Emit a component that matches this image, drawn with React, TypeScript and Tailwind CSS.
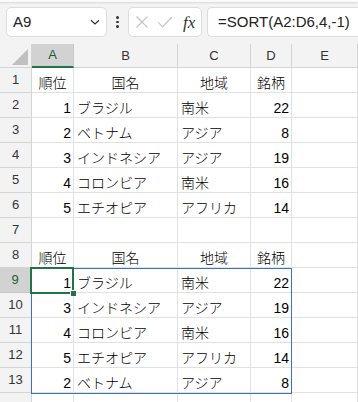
import React from "react";

type Row = { n: number; cells: (string | number)[]; header?: boolean };

const rows: Row[] = [
  { n: 1, cells: ["順位", "国名", "地域", "銘柄"], header: true },
  { n: 2, cells: [1, "ブラジル", "南米", 22] },
  { n: 3, cells: [2, "ベトナム", "アジア", 8] },
  { n: 4, cells: [3, "インドネシア", "アジア", 19] },
  { n: 5, cells: [4, "コロンビア", "南米", 16] },
  { n: 6, cells: [5, "エチオピア", "アフリカ", 14] },
  { n: 7, cells: ["", "", "", ""] },
  { n: 8, cells: ["順位", "国名", "地域", "銘柄"], header: true },
  { n: 9, cells: [1, "ブラジル", "南米", 22] },
  { n: 10, cells: [3, "インドネシア", "アジア", 19] },
  { n: 11, cells: [4, "コロンビア", "南米", 16] },
  { n: 12, cells: [5, "エチオピア", "アフリカ", 14] },
  { n: 13, cells: [2, "ベトナム", "アジア", 8] },
  { n: 14, cells: ["", "", "", ""] },
];

const font = { fontFamily: '"Liberation Sans", "Noto Sans CJK JP", sans-serif' };

export default function App() {
  return (
    <div
      className="relative w-[358px] h-[402px] overflow-hidden bg-white text-black"
      style={font}
    >
      {/* Toolbar */}
      <div className="h-[44px] bg-[#f3f3f3] flex flex-col">
        <div className="h-[2px] bg-[#fafafa] shadow-[0_1px_2px_rgba(0,0,0,0.12)]" />
        <div className="flex items-center pt-[5px]">
          <div className="ml-[6px] w-[101px] h-[30px] rounded-[5px] border border-[#dcdcdc] bg-white flex items-center justify-between pl-[6px] pr-[5px]">
            <span className="text-[15px] text-[#222]">A9</span>
            <svg width="12" height="12" viewBox="0 0 12 12">
              <path d="M2 4.2 L6 8 L10 4.2" fill="none" stroke="#333" strokeWidth="1.2" />
            </svg>
          </div>
          <div className="w-[21px] h-[30px] flex flex-col items-center justify-center gap-[2px]">
            <div className="w-[2.5px] h-[2.5px] rounded-full bg-[#333]" />
            <div className="w-[2.5px] h-[2.5px] rounded-full bg-[#333]" />
            <div className="w-[2.5px] h-[2.5px] rounded-full bg-[#333]" />
          </div>
          <div className="w-[74px] h-[30px] rounded-[5px] border border-[#dcdcdc] bg-white flex items-center pl-[6px]">
            <svg width="14" height="14" viewBox="0 0 14 14">
              <path d="M1.5 1.5 L12.5 12.5 M12.5 1.5 L1.5 12.5" stroke="#c4c4c4" strokeWidth="1.1" fill="none" />
            </svg>
            <svg width="16" height="14" viewBox="0 0 16 14" className="ml-[8px]">
              <path d="M1 7 L5.5 12 L15 2" stroke="#c4c4c4" strokeWidth="1.1" fill="none" />
            </svg>
            <span
              className="ml-[10px] text-[17px] italic text-[#333] leading-none"
              style={{ fontFamily: '"Liberation Serif", serif' }}
            >
              fx
            </span>
          </div>
          <div className="ml-[5px] flex-1 h-[30px] rounded-l-[5px] border border-r-0 border-[#dcdcdc] bg-white flex items-center pl-[10px]">
            <span className="text-[15px] text-[#222]">=SORT(A2:D6,4,-1)</span>
          </div>
        </div>
      </div>

      {/* Grid */}
      <div className="grid grid-cols-[32px_42px_104px_73px_41px_1fr]">
        {/* header row */}
        <div className="h-[24px] bg-[#f3f3f3] border-r border-b border-[#d4d4d4] relative">
          <svg width="16" height="16" viewBox="0 0 16 16" className="absolute left-[12px] top-[5px]">
            <path d="M16 0 L16 16 L0 16 Z" fill="#c0c0c0" />
          </svg>
        </div>
        <div className="h-[24px] bg-[#d2d2d2] border-r border-[#c8c8c8] border-b-2 border-b-[#217346] flex items-center justify-center text-[13px] text-[#1b5e37]">
          A
        </div>
        {["B", "C", "D", "E"].map((c) => (
          <div
            key={c}
            className="h-[24px] bg-[#f3f3f3] border-r border-b border-[#d4d4d4] flex items-center justify-center text-[13px] text-[#333]"
          >
            {c}
          </div>
        ))}

        {rows.map((r) => (
          <React.Fragment key={r.n}>
            <div
              className={
                r.n === 9
                  ? "h-[25px] bg-[#d2d2d2] border-r-2 border-r-[#217346] border-b border-b-[#c8c8c8] flex items-center justify-center text-[13px] text-[#1b5e37]"
                  : "h-[25px] bg-[#f3f3f3] border-r border-b border-[#d4d4d4] flex items-center justify-center text-[13px] text-[#333]"
              }
            >
              {r.n === 14 ? "" : r.n}
            </div>
            {r.cells.map((v, i) => {
              const isNum = typeof v === "number";
              const align = r.header
                ? "justify-center"
                : isNum
                ? "justify-end pr-[2px]"
                : "justify-start pl-[3px]";
              return (
                <div
                  key={i}
                  className={`h-[25px] border-r border-b border-[#e1e1e1] flex items-end ${align} text-[14px] leading-[18px] text-black font-light whitespace-nowrap overflow-hidden`}
                >
                  {v}
                </div>
              );
            })}
            <div className="h-[25px] border-r border-b border-[#e1e1e1]" />
          </React.Fragment>
        ))}
      </div>

      {/* Spill range border */}
      <div className="absolute left-[31px] top-[268px] w-[261px] h-[126px] border border-[#3c6fc8] pointer-events-none" />
      {/* Active cell */}
      <div className="absolute left-[30px] top-[267px] w-[44px] h-[27px] border-2 border-[#217346] pointer-events-none" />
      <div className="absolute left-[70px] top-[290px] w-[7px] h-[7px] bg-[#217346] border border-white pointer-events-none" />
    </div>
  );
}
